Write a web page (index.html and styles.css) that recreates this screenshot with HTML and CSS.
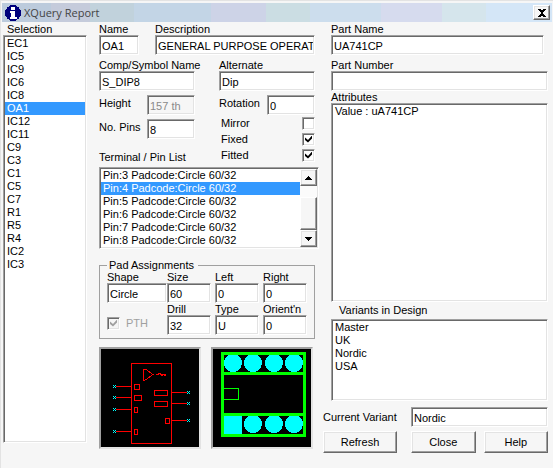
FILE: index.html
```html
<!DOCTYPE html>
<html lang="en">
<head>
<meta charset="utf-8">
<title>XQuery Report</title>
<link rel="stylesheet" href="styles.css">
</head>
<body>
<main class="dialog">
  <header class="titlebar">
    <svg class="info" viewBox="0 0 16 16" aria-hidden="true" shape-rendering="crispEdges">
      <circle cx="8" cy="8" r="8" fill="#00007c"/>
      <path fill="#fff" d="M6 2h4v3H6zM5 6h5v6h2v2H5v-2h1V8H5z"/>
    </svg>
    <h1>XQuery Report</h1>
    <button class="close" aria-label="Close window">
      <svg viewBox="0 0 8 8" aria-hidden="true" shape-rendering="crispEdges"><path d="M0 0h3v1h2V0h3v1H7v1H6v1H5v2h1v1h1v1h1v1H5V7H3v1H0V7h1V6h1V5h1V3H2V2H1V1H0z"/></svg>
    </button>
  </header>

  <div class="body">
    <section class="column selection">
      <span class="caption" id="sel-label">Selection</span>
      <ul class="listbox" role="listbox" aria-labelledby="sel-label">
        <li role="option">EC1</li>
        <li role="option">IC5</li>
        <li role="option">IC9</li>
        <li role="option">IC6</li>
        <li role="option">IC8</li>
        <li role="option" aria-selected="true">OA1</li>
        <li role="option">IC12</li>
        <li role="option">IC11</li>
        <li role="option">C9</li>
        <li role="option">C3</li>
        <li role="option">C1</li>
        <li role="option">C5</li>
        <li role="option">C7</li>
        <li role="option">R1</li>
        <li role="option">R5</li>
        <li role="option">R4</li>
        <li role="option">IC2</li>
        <li role="option">IC3</li>
      </ul>
    </section>

    <section class="column component">
      <div class="row name-row">
        <div class="field"><label for="name">Name</label><input id="name" value="OA1"></div>
        <div class="field"><label for="desc">Description</label><input id="desc" value="GENERAL PURPOSE OPERATI"></div>
      </div>
      <div class="row symbol-row">
        <div class="field"><label for="comp">Comp/Symbol Name</label><input id="comp" value="S_DIP8"></div>
        <div class="field"><label for="alt">Alternate</label><input id="alt" value="Dip"></div>
      </div>
      <div class="row symbol-row">
        <div class="metrics">
          <div class="inline"><label for="height">Height</label><input id="height" value="157 th" disabled></div>
          <div class="inline"><label for="pins">No. Pins</label><input id="pins" value="8"></div>
          <span class="caption pin-caption" id="pin-label">Terminal / Pin List</span>
        </div>
        <div class="flags">
          <div class="inline"><label for="rot">Rotation</label><input id="rot" value="0"></div>
          <div class="check"><label for="mirror">Mirror</label><input type="checkbox" id="mirror"></div>
          <div class="check"><label for="fixed">Fixed</label><input type="checkbox" id="fixed" checked></div>
          <div class="check"><label for="fitted">Fitted</label><input type="checkbox" id="fitted" checked></div>
        </div>
      </div>

      <div class="listbox pin-list">
        <ul role="listbox" aria-labelledby="pin-label">
          <li role="option">Pin:3 Padcode:Circle 60/32</li>
          <li role="option" aria-selected="true">Pin:4 Padcode:Circle 60/32</li>
          <li role="option">Pin:5 Padcode:Circle 60/32</li>
          <li role="option">Pin:6 Padcode:Circle 60/32</li>
          <li role="option">Pin:7 Padcode:Circle 60/32</li>
          <li role="option">Pin:8 Padcode:Circle 60/32</li>
        </ul>
        <div class="scrollbar">
          <button aria-label="Scroll up"><svg viewBox="0 0 7 4" aria-hidden="true" shape-rendering="crispEdges"><path d="M3 0h1v1h1v1h1v1h1v1H0V3h1V2h1V1h1z"/></svg></button>
          <div class="thumb"></div>
          <button aria-label="Scroll down"><svg viewBox="0 0 7 4" aria-hidden="true" shape-rendering="crispEdges"><path d="M0 0h7v1H6v1H5v1H4v1H3V3H2V2H1V1H0z"/></svg></button>
        </div>
      </div>

      <fieldset class="pads">
        <legend>Pad Assignments</legend>
        <div class="pad-grid">
          <div class="field"><label for="shape">Shape</label><input id="shape" value="Circle"></div>
          <div class="field"><label for="size">Size</label><input id="size" value="60"></div>
          <div class="field"><label for="left">Left</label><input id="left" value="0"></div>
          <div class="field"><label for="right">Right</label><input id="right" value="0"></div>
          <div class="pth"><input type="checkbox" id="pth" checked disabled><label for="pth">PTH</label></div>
          <div class="field"><label for="drill">Drill</label><input id="drill" value="32"></div>
          <div class="field"><label for="type">Type</label><input id="type" value="U"></div>
          <div class="field"><label for="orient">Orient'n</label><input id="orient" value="0"></div>
        </div>
      </fieldset>

      <div class="previews">
        <svg class="preview" viewBox="0 0 98 98" role="img" aria-label="Schematic symbol" shape-rendering="crispEdges">
          <g fill="none" stroke="#f00">
            <path d="M30.500 14.500h40v80h-40z"/>
            <path d="M42.500 20v12M43 20.500h2l7 5-7 5-2 1"/>
            <path d="M55 25.500h2v-1h2v1h1v1h1v-1h2v1h1v-1h1"/>
            <path d="M33.500 35.500h5v5h-5zM33.500 46.500h7v5h-7zM33.500 58.500h3v5h-3zM33.500 80.500h3v5h-3zM53.500 41.500h13v5h-13zM53.500 52.500h13v5h-13zM64.500 69.500h4v5h-4z"/>
            <path d="M15 37.500h15M15 48.500h15M15 60.500h15M15 82.500h15M71 43.500h15M71 54.500h15M71 71.500h15"/>
          </g>
          <g fill="#0ff">
            <path id="x" d="M12 36h1v1h1v1h-1v1h-1v-1h1v-1h-1zM14 36h1v1h-1zM14 38h1v1h-1z"/>
            <use href="#x" y="11"/><use href="#x" y="23"/><use href="#x" y="45"/>
            <use href="#x" x="74" y="6"/><use href="#x" x="74" y="17"/><use href="#x" x="74" y="34"/>
          </g>
        </svg>
        <svg class="preview" viewBox="0 0 98 98" role="img" aria-label="PCB footprint" shape-rendering="crispEdges">
          <g fill="#0ff">
            <circle cx="20" cy="14" r="9"/><circle cx="40" cy="14" r="9"/><circle cx="61" cy="14" r="9"/><circle cx="81" cy="14" r="9"/>
            <path d="M11 66h18v19H11z"/><circle cx="40" cy="75" r="9"/><circle cx="61" cy="75" r="9"/><circle cx="81" cy="75" r="9"/>
          </g>
          <g fill="none" stroke="#0f0">
            <path stroke-width="3" d="M9.500 4.500h82v82h-82zM9.500 24.500h82M9.500 65.500h82"/>
            <path d="M11 39.500h14.500v11H11"/>
          </g>
        </svg>
      </div>
    </section>

    <section class="column part">
      <div class="field part-name"><label for="pname">Part Name</label><input id="pname" value="UA741CP"></div>
      <div class="field"><label for="pnum">Part Number</label><input id="pnum" value=""></div>
      <span class="caption" id="attr-label">Attributes</span>
      <ul class="listbox attributes" role="listbox" aria-labelledby="attr-label">
        <li role="option">Value : uA741CP</li>
      </ul>
      <span class="caption variants-caption" id="var-label">Variants in Design</span>
      <ul class="listbox variants" role="listbox" aria-labelledby="var-label">
        <li role="option">Master</li>
        <li role="option">UK</li>
        <li role="option">Nordic</li>
        <li role="option">USA</li>
      </ul>
      <div class="footer">
        <label for="current">Current Variant</label><input id="current" value="Nordic">
        <button class="refresh">Refresh</button>
        <div class="actions"><button>Close</button><button>Help</button></div>
      </div>
    </section>
  </div>
</main>
</body>
</html>
```
FILE: styles.css
```css
* { box-sizing: border-box; }

:root {
  --face: #f6f6f6;
  --shadow: #a0a0a0;
  --dark: #696969;
  --light: #e3e3e3;
  --accent: #3399ff;
}

body {
  margin: 0;
  background: var(--face);
  color: #000;
  font: 11px/12px "Liberation Sans", Arial, sans-serif;
}

ul { margin: 0; padding: 0; list-style: none; }

input, button { margin: 0; color: inherit; font: inherit; }

label, .caption { display: block; white-space: nowrap; }

.dialog {
  min-height: 100vh;
  border-top: 1px solid var(--light);
  border-left: 1px solid var(--light);
}

/* Title bar */
.titlebar {
  display: flex;
  align-items: center;
  height: 19px;
  margin: 2px 1px 0;
  padding: 0 2px 0 3px;
  background: linear-gradient(to right,
    #bccbdc 0 9%, #c5cbdb 9% 16%, #c1d2dc 16% 24%, #c3d5e6 24% 38%,
    #cdd3e7 38% 48%, #cbdde3 48% 56%, #ccdded 56% 69%,
    #d6dbee 69% 80%, #d5e5ec 80% 88%, #d4e6f7 88%);
}

.titlebar h1 {
  flex: 1;
  margin: 0 0 0 3px;
  color: #444;
  font: 11px/18px "Open Sans", "Noto Sans", sans-serif;
}

.info { width: 16px; height: 16px; }

.close { display: grid; place-items: center; width: 17px; height: 15px; padding: 0; }
.close svg { width: 8px; height: 8px; }

button {
  padding: 0;
  border: 1px solid;
  border-color: #fff var(--dark) var(--dark) #fff;
  background: var(--face);
  box-shadow: inset -1px -1px var(--shadow), inset 1px 1px var(--light);
}

/* Sunken controls */
input, .listbox {
  border: 1px solid;
  border-color: var(--shadow) #fff #fff var(--shadow);
  background: #fff;
  box-shadow: inset 1px 1px var(--dark), inset -1px -1px var(--light);
}

input {
  display: block;
  width: 100%;
  min-width: 0;
  height: 20px;
  padding: 2px 1px 1px 2px;
  border-radius: 0;
  outline: 0;
}

input:disabled { background: var(--face); color: #8a8a8a; }

input[type="checkbox"] {
  flex: none;
  appearance: none;
  width: 13px;
  height: 13px;
  padding: 0;
}

input[type="checkbox"]:checked::before {
  content: "";
  display: block;
  width: 7px;
  height: 7px;
  margin: 2px;
  background: #000;
  clip-path: polygon(0 29%, 43% 64%, 100% 0, 100% 43%, 43% 100%, 0 64%);
}

input[type="checkbox"]:disabled::before { background: var(--shadow); }

.listbox { padding: 1px; }
.listbox li { padding-left: 2px; line-height: 13px; white-space: nowrap; }
.listbox [aria-selected="true"] { background: var(--accent); color: #fff; }

/* Columns */
.body {
  display: grid;
  grid-template-columns: minmax(0, 84fr) minmax(0, 220fr) minmax(0, 217fr);
  gap: 12px;
  padding: 1px 5px 0 2px;
}

.column { display: flex; flex-direction: column; }

.selection .caption { padding-left: 4px; }
.selection .listbox { flex: 1; margin-bottom: 10px; }

.row { display: grid; margin: 0 4px 4px 0; }
.name-row { grid-template-columns: 40fr 160fr; gap: 16px; }
.symbol-row { grid-template-columns: repeat(2, minmax(0, 1fr)); gap: 24px; }

.inline { display: grid; grid-template-columns: 1fr 1fr; }
.inline label { line-height: 16px; }

.metrics { display: flex; flex-direction: column; gap: 4px; }
.pin-caption { margin-top: auto; }

.check { display: flex; align-items: center; justify-content: space-between; height: 16px; padding-left: 2px; }

.pin-list { display: flex; }
.pin-list ul { flex: 1; }

.scrollbar {
  display: flex;
  flex-direction: column;
  width: 17px;
  background: #fbfbfb;
}
.scrollbar button { display: grid; place-items: center; height: 17px; }
.scrollbar svg { width: 7px; height: 4px; }
.thumb {
  flex: 1;
  margin-top: 11px;
  border: 1px solid;
  border-color: #fff var(--dark) var(--dark) #fff;
  background: var(--face);
  box-shadow: inset -1px -1px var(--shadow);
}

/* Pad assignments */
.pads {
  min-width: 0;
  margin: 10px 4px 8px 0;
  padding: 0 3px 3px 7px;
  border: 1px solid var(--shadow);
}
.pads legend { padding: 0 4px 0 2px; }
.pad-grid { display: grid; grid-template-columns: 60fr 48fr 48fr 48fr; }
.pad-grid .field + .field { margin-right: 4px; }
.pth + .field { margin-right: 4px; }
.pth { display: flex; align-items: center; gap: 6px; padding-top: 8px; color: var(--shadow); }

.previews { display: grid; grid-template-columns: 1fr 1fr; gap: 10px; margin-right: 6px; }
.preview {
  display: block;
  width: 100%;
  border: 2px solid;
  border-color: var(--shadow) var(--light) var(--light) var(--shadow);
  background: #000;
}

/* Part details */
.part-name { margin: 0 4px 4px 0; }
.attributes { min-height: 199px; }
.variants-caption { padding-left: 8px; line-height: 17px; }
.variants { min-height: 82px; }

.footer {
  display: grid;
  grid-template-columns: 74fr 137fr;
  gap: 4px 14px;
  align-items: center;
  margin: 6px 0 0 -8px;
}
.footer button { height: 22px; }
.actions { display: grid; grid-template-columns: 1fr 1fr; gap: 8px; }
```
